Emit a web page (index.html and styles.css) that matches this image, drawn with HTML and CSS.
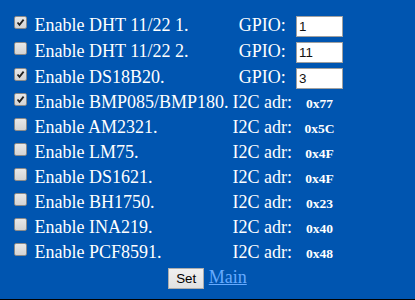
FILE: index.html
```html
<!DOCTYPE html>
<html lang="en">
<head>
    <meta charset="UTF-8">
    <meta name="viewport" content="width=device-width, initial-scale=1.0">
    <title>Sensors</title>
    <link rel="stylesheet" href="styles.css">
</head>
<body>
    <form class="sensors">
        <div class="sensor-list">
            <label class="name"><input type="checkbox" checked> Enable DHT 11/22 1.</label>
            <span class="key">GPIO:</span>
            <span class="val"><input class="gpio" type="text" value="1"></span>

            <label class="name"><input type="checkbox"> Enable DHT 11/22 2.</label>
            <span class="key">GPIO:</span>
            <span class="val"><input class="gpio" type="text" value="11"></span>

            <label class="name"><input type="checkbox" checked> Enable DS18B20.</label>
            <span class="key">GPIO:</span>
            <span class="val"><input class="gpio" type="text" value="3"></span>

            <label class="name"><input type="checkbox" checked> Enable BMP085/BMP180.</label>
            <span class="key">I2C adr:</span>
            <span class="val adr">0x77</span>

            <label class="name"><input type="checkbox"> Enable AM2321.</label>
            <span class="key">I2C adr:</span>
            <span class="val adr">0x5C</span>

            <label class="name"><input type="checkbox"> Enable LM75.</label>
            <span class="key">I2C adr:</span>
            <span class="val adr">0x4F</span>

            <label class="name"><input type="checkbox"> Enable DS1621.</label>
            <span class="key">I2C adr:</span>
            <span class="val adr">0x4F</span>

            <label class="name"><input type="checkbox"> Enable BH1750.</label>
            <span class="key">I2C adr:</span>
            <span class="val adr">0x23</span>

            <label class="name"><input type="checkbox"> Enable INA219.</label>
            <span class="key">I2C adr:</span>
            <span class="val adr">0x40</span>

            <label class="name"><input type="checkbox"> Enable PCF8591.</label>
            <span class="key">I2C adr:</span>
            <span class="val adr">0x48</span>
        </div>

        <div class="actions">
            <button type="button" class="set-btn">Set</button> <a href="#">Main</a>
        </div>
    </form>
</body>
</html>
```

FILE: styles.css
```css
body {
    margin: 0;
    height: 300px;
    box-sizing: border-box;
    border-bottom: 1px solid #000;
    background-color: #0055b0;
    color: #fff;
    font-family: "Liberation Serif", "Times New Roman", serif;
    font-size: 18px;
}

.sensor-list {
    display: grid;
    grid-template-columns: auto auto auto;
    grid-template-rows: 26px 26px;
    grid-auto-rows: 25px;
    column-gap: 4px;
    justify-content: start;
    align-items: baseline;
    padding: 13px 0 0 10px;
}

.name {
    white-space: nowrap;
}

.name input {
    -webkit-appearance: none;
    appearance: none;
    width: 13px;
    height: 13px;
    margin: 3px 3px 3px 4px;
    border: 1px solid #8a8a8a;
    border-radius: 2px;
    background: linear-gradient(#e8e8e8, #d4d4d4);
    vertical-align: -1px;
}

.name input:checked {
    background: url("data:image/svg+xml,%3Csvg xmlns='http://www.w3.org/2000/svg' viewBox='0 0 11 11'%3E%3Cpath d='M2.5 5.5 L4.5 7.8 L8.6 2.6' fill='none' stroke='%23222' stroke-width='1.8'/%3E%3C/svg%3E") center / 11px 11px no-repeat, linear-gradient(#e8e8e8, #d4d4d4);
}

.key {
    text-align: center;
    white-space: nowrap;
}

.val {
    text-align: center;
}

.adr {
    font-size: 13.5px;
    font-weight: bold;
}

.gpio {
    width: 47px;
    height: 21px;
    box-sizing: border-box;
    margin: 0;
    padding: 1px 2px;
    border: 1px solid #a0a0a0;
    font-family: "Liberation Sans", Arial, sans-serif;
    font-size: 13.33px;
    color: #111;
    background: #fff;
}

.actions {
    text-align: center;
    margin-top: 2px;
}

.set-btn {
    font-family: "Liberation Sans", Arial, sans-serif;
    font-size: 13.33px;
    height: 21px;
    padding: 1px 7px;
    border: 1px solid #adadad;
    border-radius: 0;
    background: linear-gradient(#f0f0f0, #e1e1e1);
    color: #000;
}

.actions a {
    color: #66aaff;
}
```
